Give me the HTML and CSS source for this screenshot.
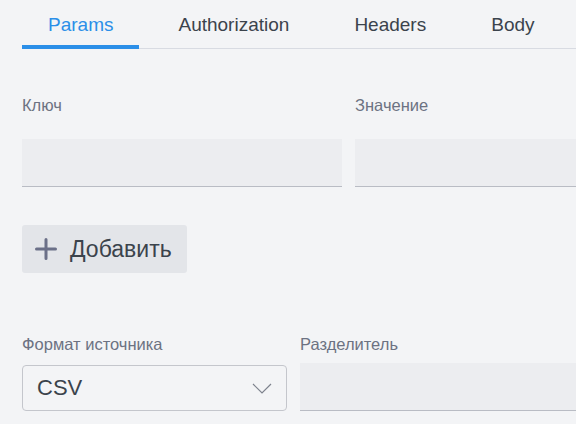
FILE: index.html
```html
<!DOCTYPE html>
<html lang="ru">
<head>
    <meta charset="UTF-8">
    <meta name="viewport" content="width=device-width, initial-scale=1.0">
    <title>Params</title>
    <link rel="stylesheet" href="styles.css">
</head>
<body>
    <div class="page">
        <div class="tabs">
            <div class="tab active">Params</div>
            <div class="tab">Authorization</div>
            <div class="tab">Headers</div>
            <div class="tab">Body</div>
        </div>

        <div class="kv">
            <div class="field">
                <label class="label">Ключ</label>
                <div class="input"></div>
            </div>
            <div class="field">
                <label class="label">Значение</label>
                <div class="input"></div>
            </div>
        </div>

        <button class="add-btn">
            <svg width="22" height="22" viewBox="0 0 22 22">
                <path d="M11 1.5v19M1.5 11h19" stroke="#6b7088" stroke-width="3" stroke-linecap="round"/>
            </svg>
            Добавить
        </button>

        <div class="source">
            <div class="field">
                <label class="label">Формат источника</label>
                <div class="select">
                    <span>CSV</span>
                    <svg width="20" height="11" viewBox="0 0 20 11">
                        <path d="M1 1l9 9 9-9" fill="none" stroke="#7d828d" stroke-width="1.2"/>
                    </svg>
                </div>
            </div>
            <div class="field">
                <label class="label">Разделитель</label>
                <div class="input"></div>
            </div>
        </div>
    </div>
</body>
</html>
```
FILE: styles.css
```css
html, body {
    margin: 0;
    background-color: #f3f4f6;
    overflow: hidden;
}
body {
    font-family: "Liberation Sans", Arial, sans-serif;
    color: #3b434c;
}
.page {
    width: 700px;
    padding-left: 22px;
}
.tabs {
    display: flex;
    gap: 13px;
    height: 48px;
    border-bottom: 1px solid #d8dbe2;
}
.tab {
    padding: 0 26px;
    font-size: 19px;
    line-height: 50px;
    white-space: nowrap;
    position: relative;
}
.tab.active {
    color: #2b8fe8;
}
.tab.active::after {
    content: "";
    position: absolute;
    left: 0;
    right: 0;
    bottom: -1px;
    height: 4px;
    background-color: #2b8fe8;
}
.kv {
    display: grid;
    grid-template-columns: 320px 320px;
    gap: 13px;
    margin-top: 47px;
}
.field {
    display: flex;
    flex-direction: column;
}
.label {
    font-size: 16.5px;
    line-height: 19px;
    color: #6c7282;
}
.kv .label {
    margin-bottom: 24px;
}
.input {
    height: 47px;
    background-color: #ecedf0;
    border-bottom: 1px solid #b9bcc4;
}
.add-btn {
    display: flex;
    align-items: center;
    gap: 13px;
    margin-top: 38px;
    height: 48px;
    padding: 0 15px 0 13px;
    border: none;
    border-radius: 3px;
    background-color: #e3e5e9;
    font-family: inherit;
    font-size: 23px;
    color: #3b434c;
}
.source {
    display: grid;
    grid-template-columns: 265px 320px;
    gap: 13px;
    margin-top: 62px;
}
.source .label {
    margin-bottom: 9px;
}
.select {
    display: flex;
    align-items: center;
    justify-content: space-between;
    height: 44px;
    margin-top: 2px;
    padding: 0 14px 0 14px;
    border: 1px solid #c4c6cc;
    border-radius: 4px;
    font-size: 22px;
}
```
